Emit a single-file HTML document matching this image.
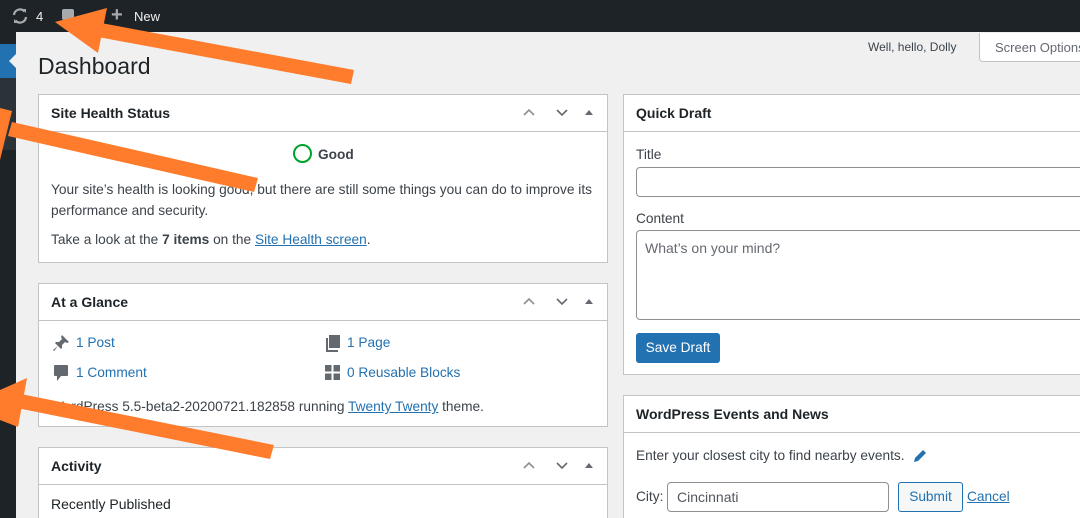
<!DOCTYPE html>
<html><head><meta charset="utf-8"><style>
*{box-sizing:border-box;margin:0;padding:0}
html,body{width:1080px;height:518px;overflow:hidden}
body{position:relative;background:#f0f0f1;font-family:"Liberation Sans",sans-serif;font-size:13.7px;color:#3c434a}
.abs{position:absolute}
#bar{left:0;top:0;width:1080px;height:32px;background:#1d2327;color:#f0f0f1}
#side{left:0;top:32px;width:16px;height:486px;background:#1d2327}
.box{position:absolute;background:#fff;border:1px solid #c3c4c7;overflow:hidden}
.hd{height:37px;border-bottom:1px solid #c3c4c7;padding:0 12px;line-height:37px;font-size:14px;font-weight:bold;color:#1d2327;position:relative}
.ctl{position:absolute;right:12px;top:13px}
a{color:#2271b1}
.lnk{color:#2271b1;text-decoration:none}
</style></head><body>
<div id="bar" class="abs">
 <svg class="abs" style="left:11px;top:7px" width="18" height="18" viewBox="0 0 18 18"><path d="M3 8a6 6 0 0 1 10.5-3.5M15 10a6 6 0 0 1-10.5 3.5" stroke="#a7aaad" stroke-width="2.2" fill="none"/><path d="M11 2l4 0 0 4z M7 16l-4 0 0-4z" fill="#a7aaad"/></svg>
 <span class="abs" style="left:36px;top:9px;font-size:13px">4</span>
 <div class="abs" style="left:62px;top:9px;width:12px;height:11px;background:#a7aaad;border-radius:2px"></div>
 <span class="abs" style="left:111px;top:4px;font-size:20px;color:#a7aaad;font-weight:bold">+</span>
 <span class="abs" style="left:134px;top:9px;font-size:13px">New</span>
</div>
<div id="side" class="abs">
 <div class="abs" style="left:0;top:12px;width:16px;height:34px;background:#2271b1"></div>
 <div class="abs" style="left:9px;top:22px;width:0;height:0;border-top:7px solid transparent;border-bottom:7px solid transparent;border-right:7px solid #f0f0f1"></div>
 <div class="abs" style="left:0;top:46px;width:16px;height:72px;background:#2c3338"></div>
</div>
<div class="abs" style="left:868px;top:40px;font-size:12px;color:#3c434a">Well, hello, Dolly</div>
<div class="abs" style="left:979px;top:33px;width:110px;height:29px;background:#fff;border:1px solid #c3c4c7;border-top:none;border-radius:0 0 4px 4px;padding:7px 15px;font-size:13px;color:#646970;white-space:nowrap">Screen Options</div>
<div class="abs" style="left:38px;top:53px;font-size:23px;color:#1d2327">Dashboard</div>

<svg width="0" height="0" style="position:absolute"><defs>
<g id="ctl"><path d="M1 7l5-5 5 5" stroke="#8c8f94" stroke-width="1.6" fill="none"/><path d="M34 2l5 5 5-5" stroke="#646970" stroke-width="1.6" fill="none"/><path d="M62 7l4-5 4 5z" fill="#646970"/></g></defs></svg>

<div class="box" style="left:38px;top:94px;width:570px;height:169px">
 <div class="hd">Site Health Status<svg class="ctl" width="72" height="10"><use href="#ctl"/></svg></div>
 <div class="abs" style="left:254px;top:49px;width:19px;height:19px;border:2px solid #00a32a;border-radius:50%"></div>
 <div class="abs" style="left:279px;top:52px;font-weight:bold;color:#3c434a">Good</div>
 <div class="abs" style="left:12px;top:84px;width:556px;line-height:21px">Your site’s health is looking good, but there are still some things you can do to improve its performance and security.</div>
 <div class="abs" style="left:12px;top:137px">Take a look at the <b>7 items</b> on the <a href="#">Site Health screen</a>.</div>
</div>

<div class="box" style="left:38px;top:283px;width:570px;height:144px">
 <div class="hd">At a Glance<svg class="ctl" width="72" height="10"><use href="#ctl"/></svg></div>
 <svg class="abs" style="left:13px;top:50px" width="18" height="18" viewBox="0 0 18 18"><path d="M10 1l7 7-2 1-2-1-3 3 0 3-1 1-3-3-4 5-1-1 5-4-3-3 1-1 3 0 3-3-1-2z" fill="#646970"/></svg>
 <span class="abs lnk" style="left:37px;top:51px">1 Post</span>
 <svg class="abs" style="left:286px;top:50px" width="16" height="18" viewBox="0 0 16 18"><path d="M4 1h11v13H4z" fill="#646970"/><path d="M1 4h2v12h10v2H1z" fill="#646970"/></svg>
 <span class="abs lnk" style="left:308px;top:51px">1 Page</span>
 <svg class="abs" style="left:14px;top:80px" width="16" height="18" viewBox="0 0 16 18"><path d="M2 1h12a1 1 0 0 1 1 1v9a1 1 0 0 1-1 1H8l-4 5v-5H2a1 1 0 0 1-1-1V2a1 1 0 0 1 1-1z" fill="#646970"/></svg>
 <span class="abs lnk" style="left:37px;top:81px">1 Comment</span>
 <svg class="abs" style="left:286px;top:81px" width="15" height="15" viewBox="0 0 15 15"><path d="M0 0h6.5v6.5H0zM8.5 0H15v6.5H8.5zM0 8.5h6.5V15H0zM8.5 8.5H15V15H8.5z" fill="#646970"/></svg>
 <span class="abs lnk" style="left:308px;top:81px">0 Reusable Blocks</span>
 <div class="abs" style="left:12px;top:115px">WordPress 5.5-beta2-20200721.182858 running <a href="#">Twenty Twenty</a> theme.</div>
</div>

<div class="box" style="left:38px;top:447px;width:570px;height:80px">
 <div class="hd">Activity<svg class="ctl" width="72" height="10"><use href="#ctl"/></svg></div>
 <div class="abs" style="left:12px;top:48px;font-size:14px;color:#1d2327">Recently Published</div>
</div>

<div class="box" style="left:623px;top:94px;width:470px;height:281px">
 <div class="hd">Quick Draft</div>
 <div class="abs" style="left:12px;top:52px">Title</div>
 <div class="abs" style="left:12px;top:72px;width:460px;height:30px;border:1px solid #8c8f94;border-radius:4px"></div>
 <div class="abs" style="left:12px;top:116px">Content</div>
 <div class="abs" style="left:12px;top:135px;width:460px;height:90px;border:1px solid #8c8f94;border-radius:4px;padding:9px 8px;color:#646970;font-size:14px">What’s on your mind?</div>
 <div class="abs" style="left:12px;top:238px;width:84px;height:30px;background:#2271b1;border-radius:3px;color:#fff;text-align:center;line-height:30px">Save Draft</div>
</div>

<div class="box" style="left:623px;top:395px;width:470px;height:130px">
 <div class="hd">WordPress Events and News</div>
 <div class="abs" style="left:12px;top:52px">Enter your closest city to find nearby events.</div>
 <svg class="abs" style="left:289px;top:53px" width="14" height="14" viewBox="0 0 14 14"><path d="M10 1l3 3-8 8-4 1 1-4z" fill="#2271b1"/></svg>
 <div class="abs" style="left:12px;top:93px">City:</div>
 <div class="abs" style="left:43px;top:86px;width:222px;height:30px;border:1px solid #8c8f94;border-radius:4px;padding:6px 9px;font-size:14px;color:#50575e">Cincinnati</div>
 <div class="abs" style="left:274px;top:86px;width:65px;height:30px;border:1px solid #2271b1;border-radius:3px;background:#f6f7f7;color:#2271b1;text-align:center;line-height:28px">Submit</div>
 <div class="abs" style="left:343px;top:93px"><a href="#">Cancel</a></div>
</div>

<svg class="abs" style="left:0;top:0" width="1080" height="518" viewBox="0 0 1080 518">
 <g fill="#ff7c2c">
  <polygon points="354,70 351,84 98,37 101,23"/>
  <polygon points="55,22 107,8 98,53"/>
  <polygon points="258,178 254,192 8,136 12,122"/>
  <polygon points="0,108 12,111 0,160"/>
  <polygon points="274,445 270,459 12,407 16,393"/>
  <polygon points="27,378 18,427 0,420 0,390"/>
 </g>
</svg>
</body></html>
